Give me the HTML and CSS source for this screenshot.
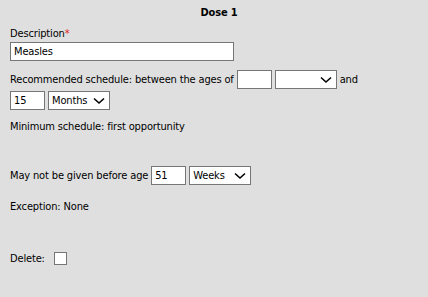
FILE: index.html
```html
<!DOCTYPE html>
<html lang="en">
<head>
    <meta charset="UTF-8">
    <title>Dose 1</title>
    <link rel="stylesheet" href="styles.css">
</head>
<body>
    <div class="dose">
        <h2 class="dose-title">Dose 1</h2>

        <div class="field">
            <label for="desc">Description<span class="req">*</span></label>
            <input type="text" id="desc" class="txt wide" value="Measles">
        </div>

        <div class="row sched">
            <span>Recommended schedule: between the ages of</span>
            <input type="text" class="txt num" value="">
            <span class="sel">
                <select class="unit"><option></option></select>
                <svg class="chev" width="12" height="8" viewBox="0 0 12 8"><path d="M1 1.5 L6 6 L11 1.5" fill="none" stroke="#000" stroke-width="1.6"/></svg>
            </span>
            <span>and</span>
        </div>
        <div class="row">
            <input type="text" class="txt num" value="15">
            <span class="sel">
                <select class="unit"><option>Months</option></select>
                <svg class="chev" width="12" height="8" viewBox="0 0 12 8"><path d="M1 1.5 L6 6 L11 1.5" fill="none" stroke="#000" stroke-width="1.6"/></svg>
            </span>
        </div>

        <p class="note">Minimum schedule: first opportunity</p>

        <div class="row before">
            <span>May not be given before age</span>
            <input type="text" class="txt num" value="51">
            <span class="sel">
                <select class="unit"><option>Weeks</option></select>
                <svg class="chev" width="12" height="8" viewBox="0 0 12 8"><path d="M1 1.5 L6 6 L11 1.5" fill="none" stroke="#000" stroke-width="1.6"/></svg>
            </span>
        </div>

        <p class="note exc">Exception: None</p>

        <div class="row del">
            <label for="delete">Delete:</label>
            <input type="checkbox" id="delete" class="chk">
        </div>
    </div>
</body>
</html>
```

FILE: styles.css
```css
* {
    margin: 0;
    padding: 0;
    box-sizing: border-box;
}

body {
    font-family: "DejaVu Sans Condensed", "DejaVu Sans", Verdana, sans-serif;
    font-size: 11px;
    letter-spacing: -0.15px;
    color: #000;
    background: #dfdfdf;
    width: 428px;
    height: 297px;
}

.dose {
    padding: 6px 10px 0 10px;
    display: flex;
    flex-direction: column;
}

.dose-title {
    text-align: center;
    font-size: 11px;
    font-weight: bold;
    line-height: 13px;
    margin-left: 10px;
}

.field {
    margin-top: 8px;
    display: flex;
    flex-direction: column;
}

.field label {
    line-height: 13px;
    margin-bottom: 2px;
}

.req {
    color: #e0201b;
}

.txt {
    font-family: inherit;
    font-size: 11px;
    letter-spacing: -0.15px;
    background: #fff;
    border: 1px solid #767676;
    height: 19px;
    padding: 0 3px;
    outline: none;
}

.wide {
    width: 224px;
}

.num {
    width: 35px;
}

.row {
    display: flex;
    align-items: center;
    gap: 3px;
    margin-top: 2px;
}

.sched {
    margin-top: 9px;
}

.sel {
    position: relative;
    display: inline-block;
    height: 19px;
}

.unit {
    appearance: none;
    -webkit-appearance: none;
    font-family: inherit;
    font-size: 11px;
    letter-spacing: -0.15px;
    width: 62px;
    height: 19px;
    background: #fff;
    border: 1px solid #767676;
    border-radius: 0;
    padding: 0 3px;
    color: #000;
}

.chev {
    position: absolute;
    right: 5px;
    top: 6px;
    pointer-events: none;
}

.note {
    line-height: 13px;
    margin-top: 10px;
}

.before {
    margin-top: 33px;
}

.exc {
    margin-top: 15px;
}

.del {
    margin-top: 39px;
    gap: 9px;
}

.chk {
    appearance: none;
    -webkit-appearance: none;
    width: 13px;
    height: 13px;
    background: #fff;
    border: 1px solid #767676;
}
```
